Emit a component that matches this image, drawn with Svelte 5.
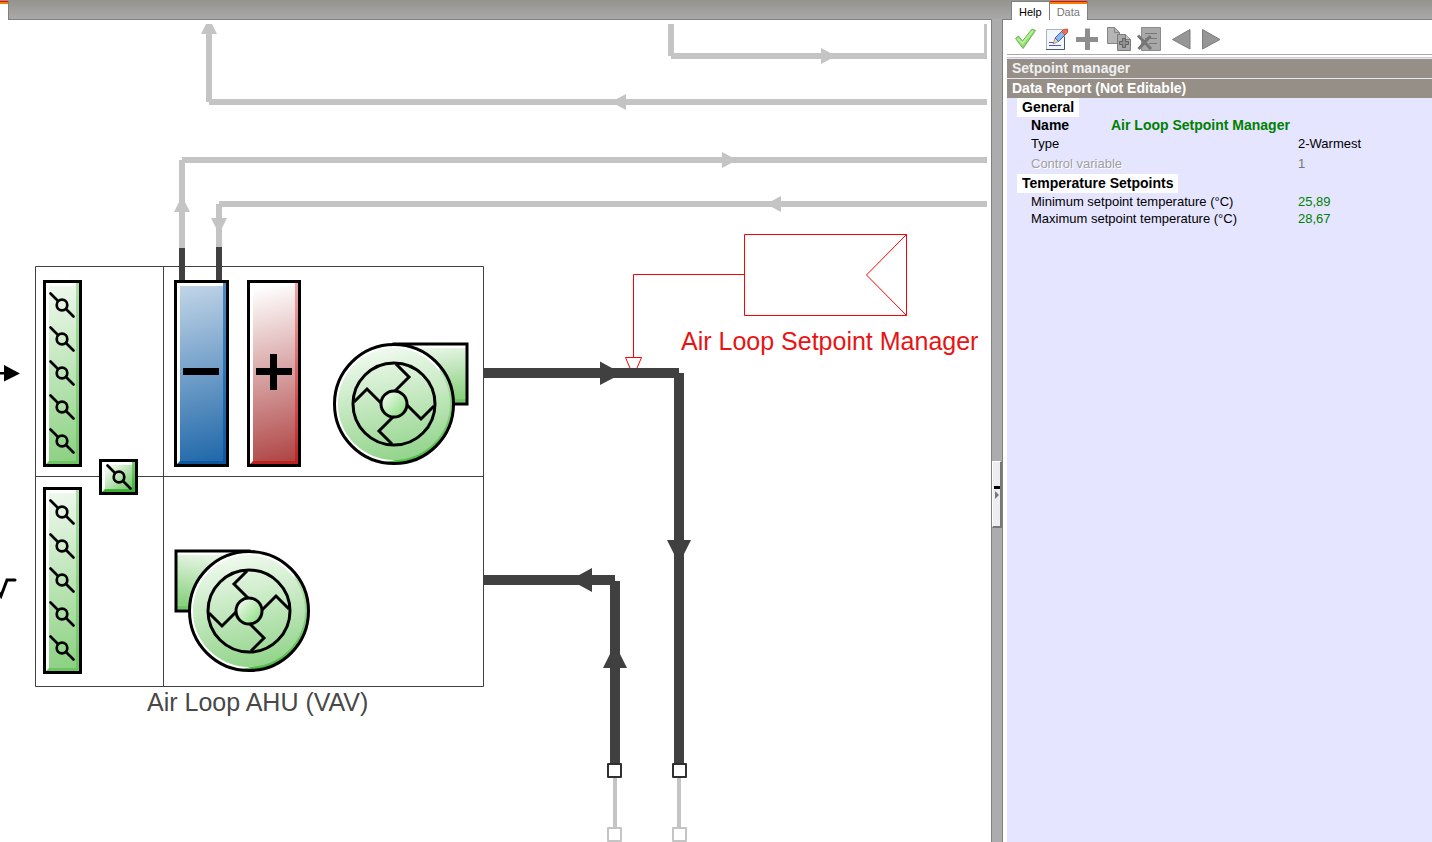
<script>
    const tools = ['Apply', 'Edit', 'Add', 'Copy', 'Delete', 'Previous', 'Next']

    const groups = [
        {
            title: 'General',
            rows: [
                { label: 'Name', value: 'Air Loop Setpoint Manager', kind: 'name' },
                { label: 'Type', value: '2-Warmest', kind: 'tall' },
                { label: 'Control variable', value: '1', kind: 'tall disabled' },
            ],
        },
        {
            title: 'Temperature Setpoints',
            rows: [
                { label: 'Minimum setpoint temperature (°C)', value: '25,89', kind: 'number' },
                { label: 'Maximum setpoint temperature (°C)', value: '28,67', kind: 'number' },
            ],
        },
    ]

    const louvers = [25, 59, 93, 127, 161]
    const blades = [0, 90, 180, 270]

    let activeTab = $state('Data')
</script>

{#snippet louver(x, y)}
    <g transform="translate({x} {y})" fill="none" stroke="#000" stroke-width="2.7" stroke-linecap="round">
        <circle r="5.3" />
        <path d="M-11.5 -11.5L-4 -4M4 4L11.5 11.5" />
    </g>
{/snippet}

{#snippet panel(x, y, w, h, fill, edge)}
    <g transform="translate({x} {y})">
        <rect width={w} height={h} fill="#fff" />
        <rect x="6" y="6" width={w - 9} height={h - 9} fill="url(#{fill})" />
        <path d="M{w - 6} 3h3v{h - 6}H3l3 -3H{w - 6}z" fill="url(#{edge})" />
        <rect x="1.5" y="1.5" width={w - 3} height={h - 3} fill="none" stroke="#000" stroke-width="3" />
    </g>
{/snippet}

{#snippet fan(x, y, flip)}
    <g transform="translate({x} {y}) scale({flip ? -1 : 1} 1)">
        <rect x="0" y="-60" width="73" height="60" fill="#fff" />
        <rect x="0" y="-56" width="72" height="56" fill="url(#outlet)" />
        <path d="M0 -3.5H72" stroke="#6fc765" stroke-width="3" />
        <rect x="0" y="-60" width="73" height="60" fill="none" stroke="#000" stroke-width="3" />
    </g>
    <g transform="translate({x} {y})">
        <circle r="60" fill="#fff" />
        <path d="M45 -38A59 59 0 0 1 -12 58C26 56 54 28 45 -38z" fill="url(#shade)" />
        <circle r="56" fill="url(#body)" />
        <circle r="59.5" fill="none" stroke="#000" stroke-width="3" />
        <g transform="scale({flip ? -1 : 1} 1)" fill="none" stroke="#000" stroke-width="3">
            <circle r="41" />
            {#each blades as angle}
                <path d="M2 -40L15 -27L1 -13" transform="rotate({angle})" />
            {/each}
        </g>
        <circle r="13" fill="url(#hub)" stroke="#000" stroke-width="3" />
    </g>
{/snippet}

<div class="app">
    <header class="tab-bar">
        <div class="tab-bar__layout"><button class="tab tab--sheet active" aria-label="Layout"></button></div>
        <div class="tab-bar__data">
            {#each ['Help', 'Data'] as tab}
                <button class="tab" class:active={activeTab === tab} onclick={() => (activeTab = tab)}>{tab}</button>
            {/each}
        </div>
    </header>

    <main class="canvas">
        <svg class="diagram" aria-label="Air loop layout">
            <defs>
                <linearGradient id="body" x1="0.4" y1="0" x2="0.6" y2="1">
                    <stop offset="0" stop-color="#f0faef" /><stop offset="1" stop-color="#92d48a" />
                </linearGradient>
                <linearGradient id="damper" gradientUnits="userSpaceOnUse" x1="0" y1="0" x2="40" y2="180">
                    <stop offset="0" stop-color="#f3faf2" /><stop offset="1" stop-color="#8bd181" />
                </linearGradient>
                <linearGradient id="small" x1="0" y1="0" x2="1" y2="1">
                    <stop offset="0.1" stop-color="#f3faf2" /><stop offset="1" stop-color="#61c055" />
                </linearGradient>
                <linearGradient id="outlet" x1="0" y1="0" x2="0.2" y2="1">
                    <stop offset="0" stop-color="#f3faf2" /><stop offset="1" stop-color="#8bd181" />
                </linearGradient>
                <linearGradient id="hub" x1="0" y1="0" x2="1" y2="1">
                    <stop offset="0.1" stop-color="#f3faf2" /><stop offset="0.8" stop-color="#9be391" />
                </linearGradient>
                <linearGradient id="shade" x1="0.6" y1="0" x2="0.8" y2="1">
                    <stop offset="0" stop-color="#c9ebc5" /><stop offset="1" stop-color="#45b53a" />
                </linearGradient>
                <linearGradient id="greenEdge" x1="0" y1="0" x2="0" y2="1">
                    <stop offset="0" stop-color="#aadfa4" /><stop offset="1" stop-color="#6cc462" />
                </linearGradient>
                <linearGradient id="smallEdge" x1="0" y1="0" x2="0" y2="1">
                    <stop offset="0" stop-color="#7dcc75" /><stop offset="1" stop-color="#3aae2e" />
                </linearGradient>
                <linearGradient id="cooling" gradientUnits="userSpaceOnUse" x1="0" y1="0" x2="45" y2="180">
                    <stop offset="0" stop-color="#c8d9ea" /><stop offset="1" stop-color="#2169aa" />
                </linearGradient>
                <linearGradient id="coolingEdge" x1="0" y1="0" x2="0" y2="1">
                    <stop offset="0" stop-color="#4e8cc6" /><stop offset="1" stop-color="#0d57a0" />
                </linearGradient>
                <linearGradient id="heating" gradientUnits="userSpaceOnUse" x1="0" y1="10" x2="45" y2="182">
                    <stop offset="0" stop-color="#fff" /><stop offset="1" stop-color="#af4444" />
                </linearGradient>
                <linearGradient id="heatingEdge" x1="0" y1="0" x2="0" y2="1">
                    <stop offset="0" stop-color="#efa7a7" /><stop offset="1" stop-color="#bf2020" />
                </linearGradient>
            </defs>

            <g transform="translate(0 -24)">
                <!-- water loop pipes -->
                <g class="pipe pipe--idle">
                    <path d="M209 26V102M209 102H987" />
                    <path d="M671 24V56M671 56H987V24" />
                    <path d="M182 248V160M182 160H987" />
                    <path d="M219 248V204M219 204H987" />
                </g>
                <g fill="#c4c4c4">
                    <path d="M201 34L209 18L217 34z" />
                    <path d="M821 48V64L836 56z" />
                    <path d="M626 94V110L611 102z" />
                    <path d="M722 152V168L737 160z" />
                    <path d="M781 196V212L766 204z" />
                    <path d="M174 212L182 196L190 212z" />
                    <path d="M211 218L219 234L227 218z" />
                </g>
                <path class="pipe pipe--stub" d="M182 248V282M219 247V282" />

                <!-- air handling unit -->
                <path class="frame" d="M35.5 266.5H483.5V686.5H35.5zM163.5 266.5V686.5M35.5 476.5H483.5" />
                {#each [280, 487] as top}
                    {@render panel(43, top, 39, 187, 'damper', 'greenEdge')}
                    {#each louvers as y}
                        {@render louver(62, top + y)}
                    {/each}
                {/each}
                {@render panel(99, 459, 39, 36, 'small', 'smallEdge')}
                {@render louver(119, 477)}

                {@render panel(174, 280, 55, 187, 'cooling', 'coolingEdge')}
                <path d="M183 368h36v7h-36z" />
                {@render panel(247, 280, 54, 187, 'heating', 'heatingEdge')}
                <path d="M256 368h14v-14h7v14h15v7h-15v15h-7v-15h-14z" />

                {@render fan(394, 404, false)}
                {@render fan(249, 611, true)}

                <!-- outside air in, exhaust out -->
                <path d="M0 372h4v-7l16 8.5l-16 8v-7H0z" />
                <path d="M-4 588L1 596L7 580H15" fill="none" stroke="#000" stroke-width="3" stroke-linecap="round" />

                <!-- supply and return ducts -->
                <g class="pipe pipe--duct">
                    <path d="M484 373H679M679 373V765" />
                    <path d="M484 580H615M615 581V765" />
                </g>
                <g fill="#404040">
                    <path d="M600 361.5V385L622 373.5z" />
                    <path d="M667 540H691L679 564z" />
                    <path d="M592 568V592L570 580z" />
                    <path d="M603 668L615 644L627 668z" />
                </g>
                <path class="pipe pipe--thin" d="M615 777V828M679 777V828" />
                <g fill="#fff" stroke-width="2" stroke-linejoin="round">
                    {#each [608, 673] as x}
                        <rect {x} y="764" width="13" height="13" stroke="#303030" />
                        <rect {x} y="828" width="13" height="13" stroke="#c4c4c4" />
                    {/each}
                </g>

                <!-- setpoint manager -->
                <g class="manager">
                    <path d="M744.5 234.5H906.5V315.5H744.5zM744.5 274.5H633.5V357.5" />
                    <path d="M906.5 234.5L866.5 275L906.5 315.5" />
                    <path d="M630 368L625.5 357.5H641.5L637 368" />
                </g>

                <text class="label" x="147" y="711">Air Loop AHU (VAV)</text>
                <text class="label label--selected" x="681" y="350">Air Loop Setpoint Manager</text>
            </g>
        </svg>
    </main>

    <div class="splitter">
        <button class="splitter__handle" aria-label="Collapse panel">
            <svg width="6" height="14"><path d="M0 0h6v3H0z" /><path d="M1 5l4 4l-4 4z" fill="#777" /></svg>
        </button>
    </div>

    <aside class="side">
        <div class="toolbar">
            {#each tools as tool}
                <button class="toolbar__button" aria-label={tool}>
                    <svg width="31" height="30">
                        {#if tool === 'Apply'}
                            <path d="M5.5 14.5L8.5 12L12.5 17L22 5L25.5 6.5L13 24.5z" fill="#8edb6c" stroke="#6fb354" />
                            <path d="M7.5 14.5L12.5 19.5L23 6.5" fill="none" stroke="#b4f096" stroke-width="2" />
                        {:else if tool === 'Edit'}
                            <path d="M5.5 5.5H23.5V25.5H5.5z" fill="#f3f6fb" stroke="#aab3c4" />
                            <path d="M5 25.5H23.5V13" fill="none" stroke="#48566f" />
                            <path d="M8 18.5H13M8 21.5H20" stroke="#4d58b5" />
                            <path d="M12 20L14 14L17.5 17.5z" fill="#f3d39a" stroke="#555c78" stroke-width="0.5" />
                            <path d="M14 14L21 7L24.5 10.5L17.5 17.5z" fill="#8db8ee" stroke="#3a62b5" />
                            <path d="M20.5 7.5L22.5 5.5L26.5 5L26.5 8.5L24 11z" fill="#e8715c" stroke="#c7503e" />
                        {:else if tool === 'Add'}
                            <path d="M13 4.5h5v8.5h8v5h-8v8h-5v-8h-9v-5h9z" fill="#8e8e8e" />
                        {:else if tool === 'Copy'}
                            <path d="M4.5 3.5H11.5L16.5 8.5V19.5H4.5z" fill="#b5b5b5" stroke="#858585" />
                            <path d="M11.5 3.5V8.5H16.5" fill="none" stroke="#858585" />
                            <path d="M14.5 10.5H22.5L27.5 15.5V26.5H14.5z" fill="#a9a9a9" stroke="#7b7b7b" />
                            <path d="M22.5 10.5V15.5H27.5" fill="#c4c4c4" stroke="#7b7b7b" />
                            <path d="M19.5 14.5h3v3h3v3h-3v3h-3v-3h-3v-3h3z" fill="#8f8f8f" stroke="#606060" />
                        {:else if tool === 'Delete'}
                            <path d="M7.5 3.5H26.5V26.5H7.5z" fill="#a8a8a8" stroke="#8b8b8b" />
                            <path d="M11 9.5H23M11 14.5H23M15 19.5H23" stroke="#777" />
                            <path d="M4 11.5L17 25M16.5 12L4.5 25" stroke="#757575" stroke-width="3" />
                        {:else if tool === 'Previous'}
                            <path d="M7.5 15.5L25 5.5V25z" fill="#969696" stroke="#7d7d7d" />
                        {:else}
                            <path d="M6.5 5.5L24 15.5L6.5 25z" fill="#969696" stroke="#7d7d7d" />
                        {/if}
                    </svg>
                </button>
            {/each}
        </div>

        <section class="report">
            <h1 class="report__bar report__bar--object">Setpoint manager</h1>
            <h2 class="report__bar">Data Report (Not Editable)</h2>
            {#each groups as group}
                <h3 class="report__group">{group.title}</h3>
                <dl class="report__rows">
                    {#each group.rows as row}
                        <div class="row {row.kind}">
                            <dt>{row.label}</dt>
                            <dd>{row.value}</dd>
                        </div>
                    {/each}
                </dl>
            {/each}
        </section>
    </aside>
</div>

<style>
:global(body) {
    background: #fff;
}

.app {
    --side: 430px;
    --line: #808080;

    display: grid;
    grid-template-columns: minmax(0, 1fr) 10px var(--side);
    grid-template-rows: 19px 1fr;
    height: 100vh;
    overflow: hidden;
    font-family: "Liberation Sans", Arial, sans-serif;
    font-size: 13px;
    background: #acacac;
}

button {
    padding: 0;
    border: 0;
    background: none;
    font: inherit;
}

.tab-bar {
    grid-column: 1 / -1;
    display: grid;
    grid-template-columns: minmax(0, 1fr) var(--side);
    background: linear-gradient(#95938d, #a9a9a8);
}

.tab-bar__layout,
.tab-bar__data {
    display: flex;
    padding-top: 1px;
}

.tab-bar__data {
    padding-left: 9px;
}

.tab {
    box-sizing: border-box;
    height: 19px;
    padding: 2px 7px 0;
    border: solid var(--line);
    border-width: 1px 1px 0;
    background: #fff;
    font-size: 11px;
    line-height: 14px;
    color: #000;
    z-index: 1;
}

.tab + .tab {
    margin-left: -1px;
}

.tab.active {
    border-top: 0;
    padding-top: 3px;
    background: linear-gradient(#e01010 1px, #ff7800 1px, #ff7800 3px, #fff 3px);
    color: #777;
}

.tab--sheet {
    width: 9px;
    padding: 0;
    border-left: 0;
}

.canvas {
    border: solid var(--line);
    border-width: 1px 1px 0 0;
    padding: 4px 4px 0 0;
    background: #fff;
    overflow: hidden;
}

.diagram {
    display: block;
    width: 100%;
    height: 100%;
}

.pipe {
    fill: none;
    stroke-width: 6px;
}

.pipe--idle {
    stroke: #c4c4c4;
}

.pipe--stub {
    stroke: #404040;
}

.pipe--duct {
    stroke: #404040;
    stroke-width: 10px;
}

.pipe--thin {
    stroke: #c4c4c4;
    stroke-width: 4px;
}

.frame {
    fill: none;
    stroke: #404040;
}

.manager {
    fill: none;
    stroke: #f00;
}

.label {
    font-size: 25px;
    fill: #484848;
}

.label--selected {
    fill: #e81414;
}

.splitter {
    display: flex;
    align-items: center;
    background: #acacac;
}

.splitter__handle {
    box-sizing: border-box;
    width: 10px;
    height: 67px;
    margin-top: 128px;
    border: 1px solid #fff;
    border-right: 2px solid #777;
    border-bottom: 2px solid #777;
    background: #eee;
}

.side {
    box-sizing: border-box;
    display: flex;
    flex-direction: column;
    border: solid var(--line);
    border-width: 1px 0 0 1px;
    padding-left: 4px;
    background: #fff;
}

.toolbar {
    display: flex;
    height: 30px;
    padding: 4px 0 0 3px;
    border-bottom: 1px solid #aaa;
}

.toolbar__button {
    width: 31px;
    height: 30px;
}

.toolbar__button svg {
    display: block;
}

.report {
    flex: 1;
    margin-top: 2px;
    border-top: 1px solid #ccc;
    padding-top: 1px;
    background: #e5e5ff;
}

.report__bar {
    box-sizing: border-box;
    height: 20px;
    margin: 0;
    padding-left: 5px;
    border-bottom: 1px solid #e8e8e8;
    background: #958f88;
    color: #fff;
    font-size: 14px;
    line-height: 19px;
}

.report__bar--object {
    color: #f0f0f0;
}

.report__bar + .report__bar {
    height: 19px;
    border-bottom: 0;
}

.report__group {
    width: max-content;
    margin: 0 0 0 10px;
    padding: 0 5px;
    background: #fff;
    font-size: 14px;
    line-height: 19px;
}

.report__rows {
    margin: 0;
    padding-left: 24px;
}

.row {
    display: flex;
    line-height: 17px;
}

.row dt {
    width: 267px;
}

.row dd {
    margin: 0;
}

.row.tall {
    line-height: 20px;
}

.row.name {
    font-size: 14px;
    font-weight: bold;
    line-height: 17px;
}

.row.name dt {
    width: 80px;
}

.row.name dd,
.row.number dd {
    color: #008000;
}

.row.disabled {
    color: #777;
}

.row.disabled dt {
    color: #a0a0a0;
    text-shadow: 1px 1px #fff;
}
</style>
